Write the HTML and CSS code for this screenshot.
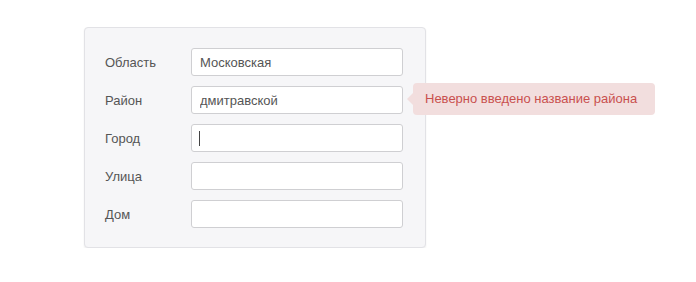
FILE: index.html
```html
<!DOCTYPE html>
<html lang="ru">
<head>
    <meta charset="UTF-8">
    <title>Адрес</title>
    <link rel="stylesheet" href="styles.css">
</head>
<body>
    <form class="card">
        <div class="form-row">
            <label for="region">Область</label>
            <input type="text" id="region" value="Московская">
        </div>
        <div class="form-row">
            <label for="district">Район</label>
            <div class="field">
                <input type="text" id="district" value="дмитравской">
                <div class="tip">Неверно введено название района</div>
            </div>
        </div>
        <div class="form-row">
            <label for="city">Город</label>
            <div class="field">
                <input type="text" id="city">
                <span class="caret"></span>
            </div>
        </div>
        <div class="form-row">
            <label for="street">Улица</label>
            <input type="text" id="street">
        </div>
        <div class="form-row">
            <label for="house">Дом</label>
            <input type="text" id="house">
        </div>
    </form>
</body>
</html>
```

FILE: styles.css
```css
* {
    margin: 0;
    padding: 0;
    box-sizing: border-box;
}

body {
    font-family: 'Liberation Sans', Arial, sans-serif;
    font-size: 13px;
    color: #555;
    background: #fff;
}

.card {
    width: 342px;
    margin: 27px 0 0 84px;
    padding: 20px 21px 19px 20px;
    background: #f6f6f8;
    border: 1px solid #e2e2e6;
    border-radius: 4px;
    box-shadow: 0 1px 2px rgba(0, 0, 0, 0.07);
    display: flex;
    flex-direction: column;
    gap: 10px;
}

.form-row {
    display: flex;
    align-items: center;
}

label {
    width: 86px;
    color: #555;
}

.field {
    position: relative;
}

input {
    width: 212px;
    height: 28px;
    padding: 0 8px;
    border: 1px solid #cfcfd2;
    border-radius: 3px;
    background: #fff;
    color: #555;
    font-family: inherit;
    font-size: 13px;
}

input:focus {
    outline: none;
}

.caret {
    position: absolute;
    left: 8px;
    top: 7px;
    width: 1px;
    height: 15px;
    background: #444;
}

.tip {
    position: absolute;
    left: 222px;
    top: -3px;
    width: 242px;
    height: 32px;
    line-height: 32px;
    padding-left: 12px;
    background: #f2dede;
    border-radius: 4px;
    color: #c9504e;
    white-space: nowrap;
}

.tip::before {
    content: '';
    position: absolute;
    left: -6px;
    top: 10px;
    border-top: 6px solid transparent;
    border-bottom: 6px solid transparent;
    border-right: 6px solid #f2dede;
}
```
